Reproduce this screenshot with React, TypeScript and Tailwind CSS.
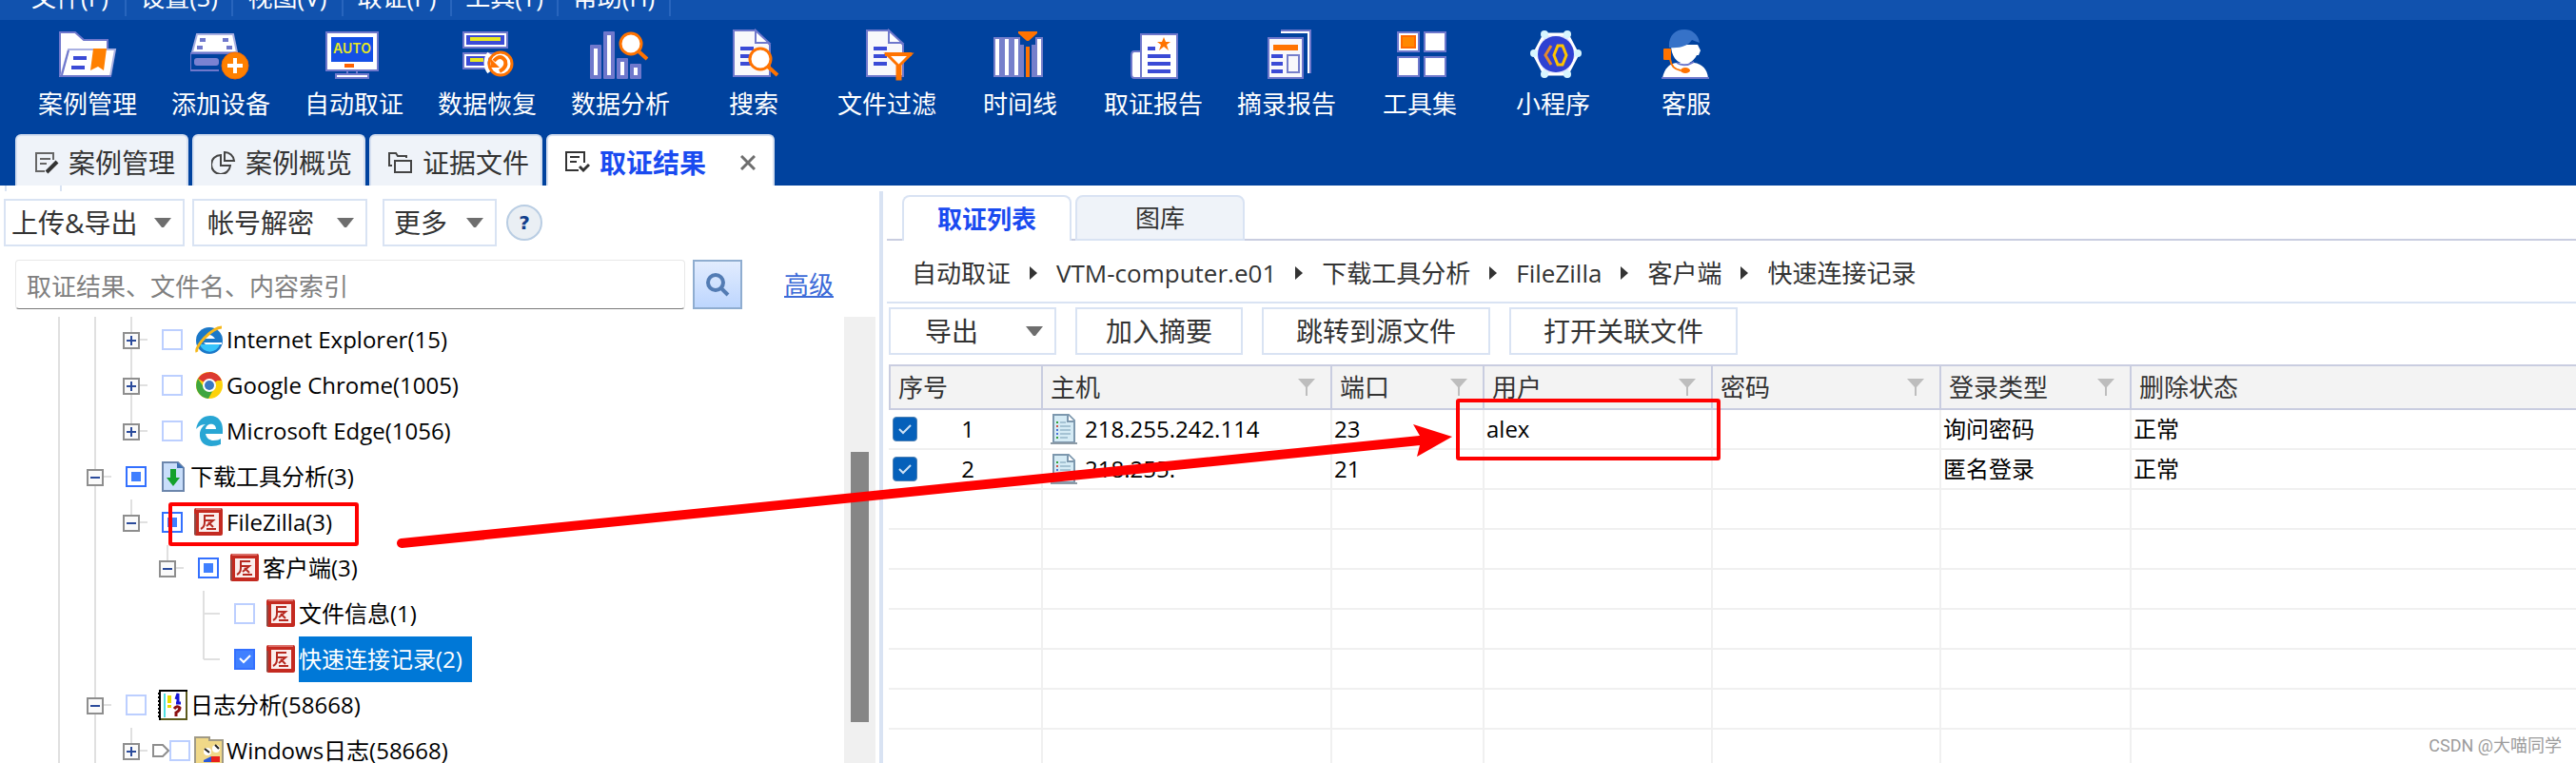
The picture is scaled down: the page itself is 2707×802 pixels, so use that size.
import type { ReactNode } from "react";

const PURPLE = "#6f78cc";
const ORANGE = "#ff7300";
const BLUE = "#3b4bd6";

const menus = [
  { label: "文件(F)", width: "w-[117px]" },
  { label: "设置(S)", width: "w-28" },
  { label: "视图(V)", width: "w-[116px]" },
  { label: "取证(P)", width: "w-[114px]" },
  { label: "工具(T)", width: "w-28" },
  { label: "帮助(H)", width: "w-[118px]" },
];

function DocSheet() {
  return (
    <>
      <path d="M11 2H34L49 17V50H11Z" fill="#f8f8fb" stroke={PURPLE} strokeWidth="2" />
      <path d="M34 2V15H48Z" fill="#fff" stroke={PURPLE} strokeWidth="2" />
      <path d="M18 21H32M18 29H32M18 37H32" stroke={BLUE} strokeWidth="4" />
    </>
  );
}

const tools: { label: string; icon: ReactNode }[] = [
  {
    label: "案例管理",
    icon: (
      <>
        <path d="M3 50V4H19L28 12H53V50Z" fill="#fff" stroke={PURPLE} strokeWidth="2" />
        <path d="M12 22H61L56 50H4Z" fill="#fff" stroke="#a9b0e2" strokeWidth="2" />
        <path d="M12 23L5 49M3 50H57" stroke={PURPLE} strokeWidth="2" />
        <path d="M17 31H31M15 41H29" stroke={BLUE} strokeWidth="4" />
        <path d="M38 21H52L49 44L43 40L35 44Z" fill="#ff8000" />
      </>
    ),
  },
  {
    label: "添加设备",
    icon: (
      <>
        <path d="M7 6H45L49 25H2Z" fill="#fff" stroke="#a9b0e2" strokeWidth="2" />
        <path d="M10 12H16M34 12H40M7 20H13M38 20H44" stroke={PURPLE} strokeWidth="4" />
        <path d="M0 26H50M0 26V44H30" fill="none" stroke={PURPLE} strokeWidth="2" />
        <rect x="4" y="31" width="26" height="8" rx="3" fill="#7a82d2" />
        <circle cx="47" cy="39" r="14" fill="#ff8000" stroke="#f56a00" />
        <path d="M47 31V47M39 39H55" stroke="#fff" strokeWidth="4" />
      </>
    ),
  },
  {
    label: "自动取证",
    icon: (
      <>
        <rect x="3" y="4" width="54" height="40" fill="#fff" stroke={PURPLE} strokeWidth="2" />
        <rect x="8" y="9" width="44" height="26" fill="#1450e6" />
        <text
          x="30"
          y="26"
          textAnchor="middle"
          fill="#e8e822"
          className="font-['Inter'] text-sm font-semibold"
        >
          AUTO
        </text>
        <rect x="22" y="37" width="10" height="4" fill="#ff6200" />
        <path d="M25 45V48M35 45V48" stroke={PURPLE} strokeWidth="2" />
        <rect x="13" y="48" width="34" height="4" fill="#fff" stroke={PURPLE} strokeWidth="2" />
      </>
    ),
  },
  {
    label: "数据恢复",
    icon: (
      <>
        <rect x="6" y="3" width="48" height="18" fill={PURPLE} />
        <rect x="8" y="5" width="44" height="14" fill="#fff" />
        <rect x="10" y="7" width="40" height="10" fill={BLUE} />
        <rect x="14" y="9" width="32" height="4" fill="#e8e822" />
        <rect x="6" y="25" width="34" height="18" fill={PURPLE} />
        <rect x="8" y="27" width="32" height="14" fill="#fff" />
        <rect x="10" y="29" width="24" height="10" fill={BLUE} />
        <rect x="14" y="31" width="14" height="4" fill="#e8e822" />
        <path d="M34 26A16 16 0 0 0 34 46" fill="none" stroke="#fff" strokeWidth="4" />
        <circle cx="46" cy="37" r="12" fill="#fff" stroke={ORANGE} strokeWidth="3" />
        <path d="M39 34Q46 26 51 34Q53 41 45 45" fill="none" stroke={ORANGE} strokeWidth="4" />
        <path d="M36 32V41H45Z" fill={ORANGE} />
      </>
    ),
  },
  {
    label: "数据分析",
    icon: (
      <>
        <rect x="0" y="17" width="12" height="36" rx="1" fill={PURPLE} />
        <rect x="14" y="3" width="12" height="50" rx="1" fill={PURPLE} />
        <rect x="28" y="31" width="12" height="22" rx="1" fill={PURPLE} />
        <rect x="42" y="37" width="12" height="16" rx="1" fill={PURPLE} />
        <path d="M6 21V49M20 7V49M34 35V49M48 41V49" stroke="#fff" strokeWidth="4" />
        <path d="M51 24L60 32" stroke={ORANGE} strokeWidth="4" />
        <circle cx="43" cy="16" r="11" fill="#fff" stroke={ORANGE} strokeWidth="3" />
      </>
    ),
  },
  {
    label: "搜索",
    icon: (
      <>
        <DocSheet />
        <path d="M47 40L57 49" stroke={ORANGE} strokeWidth="4" />
        <circle cx="39" cy="32" r="11" fill="#fff" stroke={ORANGE} strokeWidth="3" />
      </>
    ),
  },
  {
    label: "文件过滤",
    icon: (
      <>
        <DocSheet />
        <path d="M32 27H57L46 38V53H43V38Z" fill="#fff" stroke={ORANGE} strokeWidth="3" />
        <path d="M30 27H58" stroke={ORANGE} strokeWidth="4" />
        <path d="M44 38V53" stroke={ORANGE} strokeWidth="4" />
      </>
    ),
  },
  {
    label: "时间线",
    icon: (
      <>
        <path d="M4 9H32V17H36V51H4ZM48 9H56V51H44V17H48Z" fill="#767fcb" />
        <path d="M8 11V49M18 11V49M28 11V49M52 11V49" stroke="#fff" strokeWidth="4" />
        <path d="M30 3H50V5L41 13H39L30 5Z" fill={ORANGE} />
        <path d="M40 19V51" stroke={ORANGE} strokeWidth="4" />
      </>
    ),
  },
  {
    label: "取证报告",
    icon: (
      <>
        <path d="M19 24H12Q9 24 9 28V48Q9 52 12 52H19Z" fill="#fff" stroke={PURPLE} strokeWidth="2" />
        <rect x="19" y="6" width="38" height="46" fill="#fff" stroke={PURPLE} strokeWidth="2" />
        <path d="M26 21H34M26 29H50M26 37H50M26 45H50" stroke={BLUE} strokeWidth="4" />
        <path d="M43 9L45 14H50L46 17L48 23L43 19L38 23L40 17L36 14H41Z" fill={ORANGE} />
      </>
    ),
  },
  {
    label: "摘录报告",
    icon: (
      <>
        <path d="M26 2H57V47" fill="none" stroke={PURPLE} strokeWidth="2" />
        <path d="M26 4H55V47" fill="none" stroke="#fff" strokeWidth="2" />
        <rect x="13" y="10" width="36" height="42" fill="#f8f8fb" stroke={PURPLE} strokeWidth="2" />
        <rect x="18" y="17" width="26" height="6" fill={ORANGE} />
        <path d="M16 29H28M16 37H28M16 45H28" stroke={BLUE} strokeWidth="4" />
        <rect x="33" y="28" width="12" height="18" fill="#f8f8fb" stroke="#767fcb" strokeWidth="2" />
      </>
    ),
  },
  {
    label: "工具集",
    icon: (
      <>
        <rect x="9" y="4" width="22" height="20" fill="#fff" stroke={PURPLE} strokeWidth="2" />
        <rect x="37" y="4" width="22" height="20" fill="#fff" stroke={PURPLE} strokeWidth="2" />
        <rect x="9" y="30" width="22" height="20" fill="#fff" stroke={PURPLE} strokeWidth="2" />
        <rect x="37" y="30" width="22" height="20" fill="#fff" stroke={PURPLE} strokeWidth="2" />
        <rect x="13" y="8" width="14" height="12" fill="#ff8800" stroke="#ff6a00" strokeWidth="2" />
      </>
    ),
  },
  {
    label: "小程序",
    icon: (
      <>
        <path d="M12 27L23 6H47L58 27L47 48H23Z" fill="#dfe4fb" stroke="#fff" strokeWidth="3" />
        <circle cx="35" cy="27" r="19" fill="#2f41d2" />
        <g fill="#d8f6ff">
          <circle cx="12" cy="26" r="4" />
          <circle cx="58" cy="26" r="4" />
          <circle cx="23" cy="6" r="4" />
          <circle cx="47" cy="6" r="4" />
          <circle cx="23" cy="48" r="4" />
          <circle cx="47" cy="48" r="4" />
        </g>
        <path d="M30 18L24 28L30 38" fill="none" stroke="#e58a2c" strokeWidth="3" />
        <path d="M37 18H42L46 28L42 38H37L33 28Z" fill="none" stroke="#ffc400" strokeWidth="3" />
      </>
    ),
  },
  {
    label: "客服",
    icon: (
      <>
        <path d="M7 52C9 42 14 37 22 36H40C49 37 54 43 55 52Z" fill="#fff" />
        <path d="M6 52H56" stroke={PURPLE} strokeWidth="2" />
        <path d="M16 17H44L47 23L45 28H43C40 34 35 37 30 37C22 36 16 29 16 17Z" fill="#fff" />
        <path d="M22 36Q30 41 40 35" fill="none" stroke={PURPLE} strokeWidth="2" />
        <path d="M14 20C13 8 20 1 30 1C39 1 45 7 46 15L38 12C34 18 26 21 14 20Z" fill="#3672c8" />
        <rect x="8" y="21" width="8" height="12" rx="1" fill={ORANGE} />
        <path d="M15 32C16 40 20 43 26 44" fill="none" stroke={ORANGE} strokeWidth="2" />
        <ellipse cx="31" cy="44" rx="5" ry="3" fill={ORANGE} />
      </>
    ),
  },
];

const pageTabs = [
  {
    label: "案例管理",
    icon: (
      <>
        <path d="M20 9V2H2V21H11M6 8H17M6 13H13" fill="none" stroke="#666" strokeWidth="2" />
        <path d="M13 22L24 11" stroke="#333" strokeWidth="4" />
      </>
    ),
  },
  {
    label: "案例概览",
    icon: (
      <>
        <path d="M10 4A10 10 0 1 0 20 15H10Z" fill="none" stroke="#444" strokeWidth="2" />
        <path d="M14 1A10 10 0 0 1 24 10H14Z" fill="none" stroke="#444" strokeWidth="2" />
      </>
    ),
  },
  {
    label: "证据文件",
    icon: (
      <>
        <path d="M4 15H1V2H8L10 5H19V7" fill="none" stroke="#444" strokeWidth="2" />
        <rect x="7" y="10" width="17" height="12" fill="none" stroke="#444" strokeWidth="2" />
      </>
    ),
  },
];

type Check = "off" | "some" | "on";

interface Node {
  label: string;
  depth: number;
  fold?: "open" | "closed";
  check: Check;
  guides: ("full" | "top" | "none")[];
  icon: ReactNode;
  marker?: boolean;
  selected?: boolean;
}

const stampIcon = (
  <>
    <rect x="0" y="1" width="30" height="29" rx="2" fill="#c42a20" />
    <path d="M2 2H28" stroke="#dc6f68" strokeWidth="2" />
    <path d="M1 7V29" stroke="#8f4a44" strokeWidth="2" />
    <rect x="5" y="6" width="21" height="20" fill="#fbeeed" />
    <path
      d="M21 9H11V16Q11 21 7 23M11 14H20L13 20M15 16L20 21M13 23H23"
      fill="none"
      stroke="#b62920"
      strokeWidth="2"
    />
  </>
);

const nodes: Node[] = [
  {
    label: "Internet Explorer(15)",
    depth: 2,
    fold: "closed",
    check: "off",
    guides: ["full", "full", "full"],
    icon: (
      <>
        <circle cx="16" cy="17" r="14" fill="#1b78c8" />
        <path d="M6 21A11 11 0 0 0 27 21Z" fill="#36c4fb" />
        <path d="M10 15Q16 7 22 15ZM10 19H29V21H12Z" fill="#fff" />
        <path d="M3 29Q1 25 11 14Q22 3 29 3" fill="none" stroke="#f6b81c" strokeWidth="3" />
      </>
    ),
  },
  {
    label: "Google Chrome(1005)",
    depth: 2,
    fold: "closed",
    check: "off",
    guides: ["full", "full", "full"],
    icon: (
      <>
        <circle cx="16" cy="16" r="14" fill="#fdd20a" />
        <path d="M16 16L4 9A14 14 0 0 1 28 9Z" fill="#dc3a30" />
        <path d="M16 2A14 14 0 0 1 29 11H16Z" fill="#dc3a30" />
        <path d="M4 9A14 14 0 0 0 15 30L21 19L11 19Z" fill="#3fa63f" />
        <circle cx="16" cy="16" r="7" fill="#fff" />
        <circle cx="16" cy="16" r="5" fill="#3a78c4" />
      </>
    ),
  },
  {
    label: "Microsoft Edge(1056)",
    depth: 2,
    fold: "closed",
    check: "off",
    guides: ["full", "full", "top"],
    icon: (
      <path
        d="M2 14C4 4 10 0 17 0C26 0 30 7 30 14V19H12C13 24 17 26 20 26C24 26 27 25 28 24V30C25 31 22 32 18 32C11 32 5 27 6 18C7 13 9 11 12 9C7 9 4 12 2 14ZM12 14H23C23 7 13 7 12 14Z"
        fill="#28a6d4"
      />
    ),
  },
  {
    label: "下载工具分析(3)",
    depth: 1,
    fold: "open",
    check: "some",
    guides: ["full", "full"],
    icon: (
      <>
        <path d="M5 1H21L27 7V31H5Z" fill="#c9defa" stroke="#6c86ac" strokeWidth="2" />
        <path d="M20 1V7H27Z" fill="#3a6fb5" />
        <path d="M13 8H19V17H23L16 26L9 17H13Z" fill="#14a12c" />
      </>
    ),
  },
  { label: "FileZilla(3)", depth: 2, fold: "open", check: "some", guides: ["full", "full", "top"], icon: stampIcon },
  { label: "客户端(3)", depth: 3, fold: "open", check: "some", guides: ["full", "full", "none", "top"], icon: stampIcon },
  { label: "文件信息(1)", depth: 4, check: "off", guides: ["full", "full", "none", "none", "full"], icon: stampIcon },
  {
    label: "快速连接记录(2)",
    depth: 4,
    check: "on",
    guides: ["full", "full", "none", "none", "top"],
    icon: stampIcon,
    selected: true,
  },
  {
    label: "日志分析(58668)",
    depth: 1,
    fold: "open",
    check: "off",
    guides: ["full", "full"],
    icon: (
      <>
        <rect x="2" y="1" width="28" height="30" fill="#fff" stroke="#000" strokeWidth="2" />
        <path d="M1 3V31" stroke="#000" strokeWidth="3" strokeDasharray="2 2" />
        <path d="M7 4V29" stroke="#4fe0e0" strokeWidth="2" />
        <path d="M12 6V14M12 16V19" stroke="#e8dc00" strokeWidth="4" />
        <path d="M19 10L21 4V14M19 14H24" fill="none" stroke="#1616d8" strokeWidth="3" />
        <path d="M17 20Q20 16 23 19Q23 22 19 24V28" fill="none" stroke="#8c1010" strokeWidth="3" />
        <path d="M30 2V31H3" fill="none" stroke="#5c5a1c" strokeWidth="2" />
      </>
    ),
  },
  {
    label: "Windows日志(58668)",
    depth: 2,
    fold: "closed",
    check: "off",
    guides: ["full", "full", "top"],
    marker: true,
    icon: (
      <>
        <path d="M1 31V2H16V5H30V31Z" fill="#f0d888" stroke="#a09a86" strokeWidth="2" />
        <circle cx="14" cy="17" r="4" fill="#fff" />
        <circle cx="23" cy="14" r="4" fill="#fff" />
        <path d="M11 14L16 18M22 10L26 14" stroke="#222" strokeWidth="2" />
        <path d="M10 26L18 22V28H10Z" fill="#2b59d8" />
        <path d="M18 22H27V28H18Z" fill="#e8211c" />
      </>
    ),
  },
];

const columns = [
  { label: "序号", width: "w-[162px]", filter: false },
  { label: "主机", width: "w-[304px]", filter: true },
  { label: "端口", width: "w-40", filter: true },
  { label: "用户", width: "w-60", filter: true },
  { label: "密码", width: "w-60", filter: true },
  { label: "登录类型", width: "w-[200px]", filter: true },
  { label: "删除状态", width: "", filter: false },
];

const records = [
  { host: "218.255.242.114", port: "23", user: "alex", password: "", login: "询问密码", status: "正常" },
  { host: "218.255.", port: "21", user: "", password: "", login: "匿名登录", status: "正常" },
];

const crumbs = ["自动取证", "VTM-computer.e01", "下载工具分析", "FileZilla", "客户端", "快速连接记录"];

function Caret() {
  return (
    <svg width="18" height="10" viewBox="0 0 18 10" className="shrink-0">
      <path d="M0 0H18L10 10H8Z" fill="#6e6e6e" />
    </svg>
  );
}

function FilterIcon() {
  return (
    <svg width="18" height="18" viewBox="0 0 18 18" className="shrink-0">
      <path d="M0 0H18L10 9V18H8V9Z" fill="#bdbdbd" />
    </svg>
  );
}

function TreeCheckbox({ id, state }: { id: string; state: Check }) {
  return (
    <span className="relative flex shrink-0">
      <input
        id={id}
        type="checkbox"
        defaultChecked={state === "on"}
        className={`size-[22px] appearance-none border-2 ${
          state === "off" ? "border-[#bccfff]" : "border-[#3370ff]"
        } checked:bg-[#4080ff]`}
      />
      {state !== "off" && (
        <svg width="22" height="22" viewBox="0 0 22 22" className="pointer-events-none absolute inset-0">
          {state === "some" ? (
            <rect x="6" y="6" width="10" height="10" fill="#4080ff" />
          ) : (
            <path d="M6 10L10 14L17 7" fill="none" stroke="#fff" strokeWidth="2" />
          )}
        </svg>
      )}
    </span>
  );
}

function TreeRow({ node, index }: { node: Node; index: number }) {
  const id = `node-${index}`;
  return (
    <li className="flex h-12 shrink-0 items-center pl-[43px]">
      {node.guides.map((guide, level) => (
        <span key={level} className="relative h-12 w-[38px] shrink-0">
          <svg width="38" height="48" viewBox="0 0 38 48">
            {guide === "full" && <path d="M19 0V48" stroke="#e0e0e0" strokeWidth="2" />}
            {guide === "top" && <path d="M19 0V24" stroke="#e0e0e0" strokeWidth="2" />}
            {level === node.depth && <path d="M19 24H36" stroke="#e0e0e0" strokeWidth="2" />}
          </svg>
          {level === node.depth && node.fold && (
            <button
              type="button"
              aria-label={node.fold === "open" ? "收起" : "展开"}
              className="absolute top-4 left-2.5 size-[18px] border-2 border-[#8e8e8e] bg-[#fafafa]"
            >
              <svg width="14" height="14" viewBox="0 0 14 14">
                <path
                  d={node.fold === "open" ? "M2 7H12" : "M2 7H12M7 2V12"}
                  stroke="#2b4b9b"
                  strokeWidth="2"
                />
              </svg>
            </button>
          )}
        </span>
      ))}
      {node.marker ? (
        <svg width="21" height="14" viewBox="0 0 21 14" className="shrink-0">
          <path d="M4 1H14L20 7L14 13H4Z" fill="none" stroke="#8e8e8e" strokeWidth="2" />
        </svg>
      ) : (
        <span className="w-[13px] shrink-0" />
      )}
      <TreeCheckbox id={id} state={node.check} />
      <svg
        width="32"
        height="32"
        viewBox="0 0 32 32"
        className={`mr-0.5 shrink-0 ${node.marker ? "ml-1" : "ml-3"}`}
      >
        {node.icon}
      </svg>
      <label
        htmlFor={id}
        className={`whitespace-nowrap text-2xl leading-[48px] ${
          node.selected ? "bg-[#0078d7] pr-2.5 text-white" : "text-black"
        }`}
      >
        {node.label}
      </label>
    </li>
  );
}

function DropButton({ label, className }: { label: string; className: string }) {
  return (
    <button
      type="button"
      className={`flex h-[50px] shrink-0 items-center justify-between border-2 border-[#d9e3f3] bg-white text-[28px] text-[#333] ${className}`}
    >
      <span className="whitespace-nowrap">{label}</span>
      <Caret />
    </button>
  );
}

function Sidebar() {
  return (
    <aside className="flex w-[924px] shrink-0 flex-col">
      <div className="flex h-1.5 shrink-0 gap-14 pl-[5px]">
        <span className="w-0.5 bg-[#d9e3f3]" />
        <span className="w-0.5 bg-[#d9e3f3]" />
      </div>
      <div className="flex shrink-0 items-center pt-2 pl-1">
        <DropButton label="上传&amp;导出" className="w-[190px] pr-3 pl-1.5" />
        <DropButton label="帐号解密" className="ml-2 w-[184px] pr-3 pl-3.5" />
        <DropButton label="更多" className="ml-4 w-[120px] pr-3 pl-2.5" />
        <button
          type="button"
          className="ml-2.5 size-[38px] rounded-full border-2 border-[#b9cde3] bg-[#eaeff4] font-['DejaVu_Sans'] text-xl leading-[34px] font-bold text-[#123f8c]"
        >
          ?
        </button>
      </div>
      <div className="flex shrink-0 items-center pt-3.5 pb-2 pl-4">
        <input
          type="text"
          aria-label="搜索"
          placeholder="取证结果、文件名、内容索引"
          className="h-[52px] w-[704px] rounded-sm border border-[#e8e8e8] border-b-[#7a7a7a] pt-1 pl-[11px] text-[26px] outline-none placeholder:text-[#808080]"
        />
        <button
          type="button"
          aria-label="查找"
          className="ml-2 flex size-[52px] items-center justify-center border-2 border-[#8fadd0] bg-linear-to-b from-[#e2ecfe] to-[#bdd6fe]"
        >
          <svg width="26" height="26" viewBox="0 0 26 26">
            <circle cx="11" cy="11" r="8" fill="none" stroke="#537cb4" strokeWidth="4" />
            <path d="M16 16L24 24" stroke="#537cb4" strokeWidth="4" />
          </svg>
        </button>
        <a href="#advanced" className="ml-11 text-[26px] text-[#3d6bd8] underline">
          高级
        </a>
      </div>
      <div className="flex min-h-0 grow justify-between pr-1">
        <ul className="flex flex-col">
          {nodes.map((node, index) => (
            <TreeRow key={node.label} node={node} index={index} />
          ))}
        </ul>
        <div className="w-[33px] bg-[#f0f0f0] pt-[142px] pl-[7px]">
          <div className="h-[284px] w-[19px] bg-[#868686]" />
        </div>
      </div>
    </aside>
  );
}

function RecordTable() {
  const blanks = Array.from({ length: 7 }, (_, i) => i);
  const cell = "h-[42px] border-r-2 border-b-2 border-[#f0f0f0] p-0 pl-0.5 last:border-r-0";
  return (
    <table className="w-full table-fixed border-separate border-spacing-0 text-2xl text-black">
      <thead>
        <tr>
          {columns.map((column) => (
            <th
              key={column.label}
              className={`h-12 border-y-2 border-r-2 border-[#c9cde0] bg-[#f3f3f3] p-0 text-left text-[26px] leading-[44px] font-normal text-[#333] first:border-l-2 last:border-r-0 ${column.width}`}
            >
              <div className="flex items-center justify-between pr-4 pl-2">
                {column.label}
                {column.filter && <FilterIcon />}
              </div>
            </th>
          ))}
        </tr>
      </thead>
      <tbody>
        {records.map((record, index) => (
          <tr key={record.host}>
            <td className={cell}>
              <div className="flex items-center pl-0.5">
                <span className="relative flex">
                  <input
                    type="checkbox"
                    defaultChecked
                    aria-label={`选择 ${index + 1}`}
                    className="size-[26px] appearance-none rounded-sm border border-[#4d80b4] checked:bg-[#0560ba]"
                  />
                  <svg width="26" height="26" viewBox="0 0 26 26" className="pointer-events-none absolute inset-0">
                    <path d="M7 13L11 17L19 9" fill="none" stroke="#cfe2f5" strokeWidth="2" />
                  </svg>
                </span>
                <span className="grow pr-6 text-center leading-10">{index + 1}</span>
              </div>
            </td>
            <td className={cell}>
              <div className="flex items-center gap-2 pl-1.5">
                <svg width="28" height="32" viewBox="0 0 28 32">
                  <path d="M3 1H19L25 7V30H3Z" fill="#d5ebf5" stroke="#7d98ae" strokeWidth="2" />
                  <path d="M18 1V8H25" fill="#fff" stroke="#7d98ae" strokeWidth="2" />
                  <path d="M0 31H28" stroke="#8c9aa6" strokeWidth="2" />
                  <path d="M10 9H16M10 13H21M10 17H21M10 21H21M10 25H18" stroke="#a5c3d4" strokeWidth="2" />
                  <path d="M6 9H8M6 25H8" stroke="#35a03c" strokeWidth="2" />
                  <path d="M6 13H8" stroke="#d05548" strokeWidth="2" />
                  <path d="M6 17H8M6 21H8" stroke="#4a74d8" strokeWidth="2" />
                </svg>
                <span className="leading-10">{record.host}</span>
              </div>
            </td>
            <td className={cell}>{record.port}</td>
            <td className={cell}>{record.user}</td>
            <td className={cell}>{record.password}</td>
            <td className={cell}>{record.login}</td>
            <td className={cell}>{record.status}</td>
          </tr>
        ))}
        {blanks.map((row) => (
          <tr key={row}>
            {columns.map((column) => (
              <td key={column.label} className={cell} />
            ))}
          </tr>
        ))}
      </tbody>
    </table>
  );
}

function ResultPanel() {
  const button = "h-[50px] border-2 border-[#d9e3f3] bg-white text-[28px] whitespace-nowrap text-[#333]";
  return (
    <main className="mt-1.5 min-w-0 grow border-l-4 border-[#d9e3f3] pl-1">
      <div className="flex h-[52px] items-end pt-1">
        <span className="h-0.5 w-4 bg-[#c9cde0]" />
        <button
          type="button"
          className="h-12 w-[178px] rounded-t-lg border-2 border-b-0 border-[#d9e3f3] bg-white text-[26px] font-bold text-[#1a4bf0]"
        >
          取证列表
        </button>
        <span className="h-0.5 w-1 bg-[#c9cde0]" />
        <button
          type="button"
          className="h-12 w-[178px] rounded-t-lg border-2 border-[#d9e3f3] bg-[#eff3f9] text-[26px] text-[#333]"
        >
          图库
        </button>
        <span className="h-0.5 grow bg-[#c9cde0]" />
      </div>
      <nav className="flex h-[66px] items-center gap-5 border-b-2 border-[#d9e3f3] pt-1 pl-[26px] text-[26px] text-[#333]">
        {crumbs.map((crumb, index) => (
          <span key={crumb} className="flex items-center gap-5">
            {index > 0 && (
              <svg width="8" height="14" viewBox="0 0 8 14">
                <path d="M0 0L8 7L0 14Z" fill="#333" />
              </svg>
            )}
            <a href="#crumb">{crumb}</a>
          </span>
        ))}
      </nav>
      <div className="flex gap-5 pt-1 pb-2.5 pl-0.5">
        <DropButton label="导出" className="w-44 pr-3 pl-9" />
        <button type="button" className={`${button} w-44`}>
          加入摘要
        </button>
        <button type="button" className={`${button} w-60`}>
          跳转到源文件
        </button>
        <button type="button" className={`${button} w-60`}>
          打开关联文件
        </button>
      </div>
      <div className="pl-0.5">
        <RecordTable />
      </div>
    </main>
  );
}

export default function App() {
  return (
    <div className="relative flex h-screen flex-col overflow-hidden bg-white font-['Open_Sans','Noto_Sans_CJK_SC',sans-serif]">
      <header className="shrink-0 bg-[#00429e]">
        <nav className="flex h-[21px] items-end overflow-hidden bg-[#1152ae] pb-1 pl-4">
          {menus.map((menu) => (
            <button
              key={menu.label}
              type="button"
              className={`h-11 shrink-0 border-r-2 border-[#2865bd] pt-1 text-[26px] leading-9 text-white ${menu.width}`}
            >
              {menu.label}
            </button>
          ))}
        </nav>
        <div className="flex pt-[9px] pl-[22px]">
          {tools.map((tool) => (
            <button
              key={tool.label}
              type="button"
              className="flex w-[140px] shrink-0 flex-col items-center gap-[7px] text-[26px] leading-8 text-white"
            >
              <svg width="64" height="56" viewBox="0 0 64 56">
                {tool.icon}
              </svg>
              {tool.label}
            </button>
          ))}
        </div>
        <div className="flex gap-1 pt-4 pl-4">
          {pageTabs.map((tab) => (
            <button
              key={tab.label}
              type="button"
              className="flex h-[54px] w-[182px] items-center gap-2.5 rounded-t-md border-2 border-b-0 border-[#d5dff0] bg-[#eff3f9] pt-1 pl-[18px] text-[28px] whitespace-nowrap text-[#333]"
            >
              <svg width="26" height="24" viewBox="0 0 26 24" className="shrink-0">
                {tab.icon}
              </svg>
              {tab.label}
            </button>
          ))}
          <div className="flex h-[54px] w-60 items-center rounded-t-md border-2 border-b-0 border-[#d5dff0] bg-white pt-1 pr-[18px] pl-[18px]">
            <svg width="26" height="24" viewBox="0 0 26 24" className="shrink-0">
              <path d="M20 12V1H1V20H14M5 6H15M5 11H12" fill="none" stroke="#333" strokeWidth="2" />
              <path d="M15 16L19 20L25 14" fill="none" stroke="#333" strokeWidth="3" />
            </svg>
            <button type="button" className="ml-2.5 grow text-left text-[28px] font-bold whitespace-nowrap text-[#1a4bf0]">
              取证结果
            </button>
            <button type="button" aria-label="关闭">
              <svg width="16" height="16" viewBox="0 0 16 16">
                <path d="M1 1L15 15M15 1L1 15" stroke="#6e6e6e" strokeWidth="3" />
              </svg>
            </button>
          </div>
        </div>
      </header>
      <div className="flex min-h-0 grow">
        <Sidebar />
        <ResultPanel />
      </div>

      {/* red marks drawn over the window */}
      <svg className="pointer-events-none absolute top-0 left-0" width="1820" height="600" viewBox="0 0 1820 600">
        <rect x="179" y="530" width="196" height="42" rx="1" fill="none" stroke="#f00" strokeWidth="4" />
        <rect x="1532" y="421" width="274" height="61" rx="1" fill="none" stroke="#f00" strokeWidth="4" />
        <path d="M422 571L1492 463" stroke="#f00" strokeWidth="10" strokeLinecap="round" />
        <path d="M1526 459L1485 446L1492 458V468L1489 480Z" fill="#f00" />
      </svg>
      <p className="absolute right-[15px] bottom-1.5 font-['Roboto','Noto_Sans_CJK_SC',sans-serif] text-lg leading-6 text-[#9c9c9c]">
        CSDN @大喵同学
      </p>
    </div>
  );
}
